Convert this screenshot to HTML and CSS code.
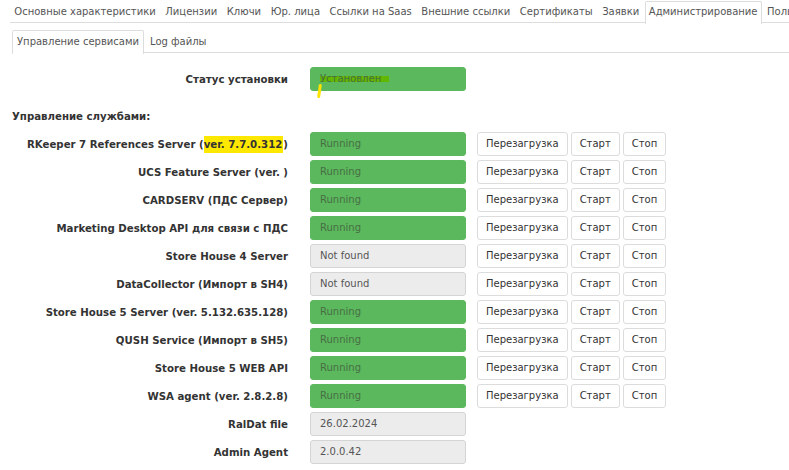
FILE: index.html
```html
<!DOCTYPE html>
<html lang="ru">
<head>
<meta charset="utf-8">
<title>Администрирование</title>
<link rel="stylesheet" href="styles.css">
</head>
<body>
<div class="page">
  <ul class="tabs tabs-top">
    <li class="tab">Основные характеристики</li>
    <li class="tab">Лицензии</li>
    <li class="tab">Ключи</li>
    <li class="tab">Юр. лица</li>
    <li class="tab">Ссылки на Saas</li>
    <li class="tab">Внешние ссылки</li>
    <li class="tab">Сертификаты</li>
    <li class="tab">Заявки</li>
    <li class="tab active">Администрирование</li>
    <li class="tab">Пользователи</li>
  </ul>
  <ul class="tabs tabs-sub">
    <li class="tab active">Управление сервисами</li>
    <li class="tab">Log файлы</li>
  </ul>

  <div class="status-row row">
    <div class="label">Статус установки</div>
    <div class="field ok status-field"><span class="hl-green">Установлен</span><span class="hl-stroke"></span></div>
  </div>

  <div class="heading">Управление службами:</div>

  <div class="rows">
    <div class="row">
      <div class="label">RKeeper 7 References Server (<span class="hl-yellow">ver. 7.7.0.312</span>)</div>
      <div class="field ok">Running</div>
      <div class="btns"><button class="btn">Перезагрузка</button><button class="btn">Старт</button><button class="btn">Стоп</button></div>
    </div>
    <div class="row">
      <div class="label">UCS Feature Server (ver. )</div>
      <div class="field ok">Running</div>
      <div class="btns"><button class="btn">Перезагрузка</button><button class="btn">Старт</button><button class="btn">Стоп</button></div>
    </div>
    <div class="row">
      <div class="label">CARDSERV (ПДС Сервер)</div>
      <div class="field ok">Running</div>
      <div class="btns"><button class="btn">Перезагрузка</button><button class="btn">Старт</button><button class="btn">Стоп</button></div>
    </div>
    <div class="row">
      <div class="label">Marketing Desktop API для связи с ПДС</div>
      <div class="field ok">Running</div>
      <div class="btns"><button class="btn">Перезагрузка</button><button class="btn">Старт</button><button class="btn">Стоп</button></div>
    </div>
    <div class="row">
      <div class="label">Store House 4 Server</div>
      <div class="field">Not found</div>
      <div class="btns"><button class="btn">Перезагрузка</button><button class="btn">Старт</button><button class="btn">Стоп</button></div>
    </div>
    <div class="row">
      <div class="label">DataCollector (Импорт в SH4)</div>
      <div class="field">Not found</div>
      <div class="btns"><button class="btn">Перезагрузка</button><button class="btn">Старт</button><button class="btn">Стоп</button></div>
    </div>
    <div class="row">
      <div class="label">Store House 5 Server (ver. 5.132.635.128)</div>
      <div class="field ok">Running</div>
      <div class="btns"><button class="btn">Перезагрузка</button><button class="btn">Старт</button><button class="btn">Стоп</button></div>
    </div>
    <div class="row">
      <div class="label">QUSH Service (Импорт в SH5)</div>
      <div class="field ok">Running</div>
      <div class="btns"><button class="btn">Перезагрузка</button><button class="btn">Старт</button><button class="btn">Стоп</button></div>
    </div>
    <div class="row">
      <div class="label">Store House 5 WEB API</div>
      <div class="field ok">Running</div>
      <div class="btns"><button class="btn">Перезагрузка</button><button class="btn">Старт</button><button class="btn">Стоп</button></div>
    </div>
    <div class="row">
      <div class="label">WSA agent (ver. 2.8.2.8)</div>
      <div class="field ok">Running</div>
      <div class="btns"><button class="btn">Перезагрузка</button><button class="btn">Старт</button><button class="btn">Стоп</button></div>
    </div>
    <div class="row">
      <div class="label">RalDat file</div>
      <div class="field">26.02.2024</div>
    </div>
    <div class="row">
      <div class="label">Admin Agent</div>
      <div class="field">2.0.0.42</div>
    </div>
  </div>
</div>
</body>
</html>
```

FILE: styles.css
```css
html, body {
  margin: 0;
  padding: 0;
  background: #fff;
}
body {
  font-family: "DejaVu Sans", Verdana, sans-serif;
  font-size: 10px;
  color: #333;
  width: 789px;
  height: 470px;
  overflow: hidden;
}
.page {
  width: 789px;
}
.tabs {
  list-style: none;
  margin: 0;
  padding: 0;
  display: flex;
  white-space: nowrap;
  border-bottom: 1px solid #ddd;
}
.tabs-top {
  margin-left: 10px;
  padding-top: 1px;
  height: 21px;
}
.tabs-sub {
  margin-left: 12px;
  margin-top: 7px;
  height: 22px;
}
.tab {
  padding: 0 3.3px;
  height: 21px;
  line-height: 20px;
  border: 1px solid transparent;
  border-bottom: none;
  margin-right: 1px;
  color: #555;
  flex: none;
  border-radius: 2px 2px 0 0;
}
.tabs-sub .tab {
  padding: 0 4px;
  height: 22px;
  line-height: 21px;
}
.tab.active {
  border-color: #ddd;
  background: #fff;
  position: relative;
  height: 22px;
  margin-bottom: -1px;
}
.tabs-sub .tab.active {
  height: 23px;
}

.row {
  display: flex;
  align-items: center;
  height: 24px;
}
.status-row {
  margin-top: 14px;
}
.label {
  width: 288px;
  text-align: right;
  font-weight: bold;
  font-size: 10.2px;
  color: #333;
  margin-right: 22px;
  white-space: nowrap;
  flex: none;
}
.field {
  width: 156px;
  height: 24px;
  box-sizing: border-box;
  border: 1px solid #d4d4d4;
  border-radius: 3px;
  background: #ececec;
  color: #555;
  padding-left: 9px;
  line-height: 22px;
  flex: none;
  position: relative;
}
.field.ok {
  background: #5cb85c;
  border-color: #5cb85c;
  color: #466e46;
}
.status-field {
  color: #2c4a1c;
}
.heading {
  margin: 19px 0 0 12px;
  height: 14px;
  line-height: 14px;
  font-weight: bold;
  font-size: 10.2px;
  color: #333;
}
.rows {
  margin-top: 8px;
  display: flex;
  flex-direction: column;
  gap: 4px;
}
.btns {
  display: flex;
  gap: 3px;
  margin-left: 11px;
}
.btn {
  font-family: "DejaVu Sans", Verdana, sans-serif;
  font-size: 10px;
  color: #333;
  background: #fff;
  border: 1px solid #dcdcdc;
  border-radius: 3px;
  height: 24px;
  padding: 0 8px;
  margin: 0;
  line-height: 22px;
}
.hl-yellow {
  background: #ffe800;
  padding: 3px 1px 3px 0;
}
.hl-green {
  background: linear-gradient(to bottom, transparent 0, transparent 25%, #62b800 25%, #62b800 80%, transparent 80%);
  padding-right: 8px;
}
.hl-stroke {
  position: absolute;
  left: 7px;
  top: 16px;
  width: 3px;
  height: 14px;
  background: #ffe400;
  border-radius: 2px;
  transform: rotate(8deg);
}
```
